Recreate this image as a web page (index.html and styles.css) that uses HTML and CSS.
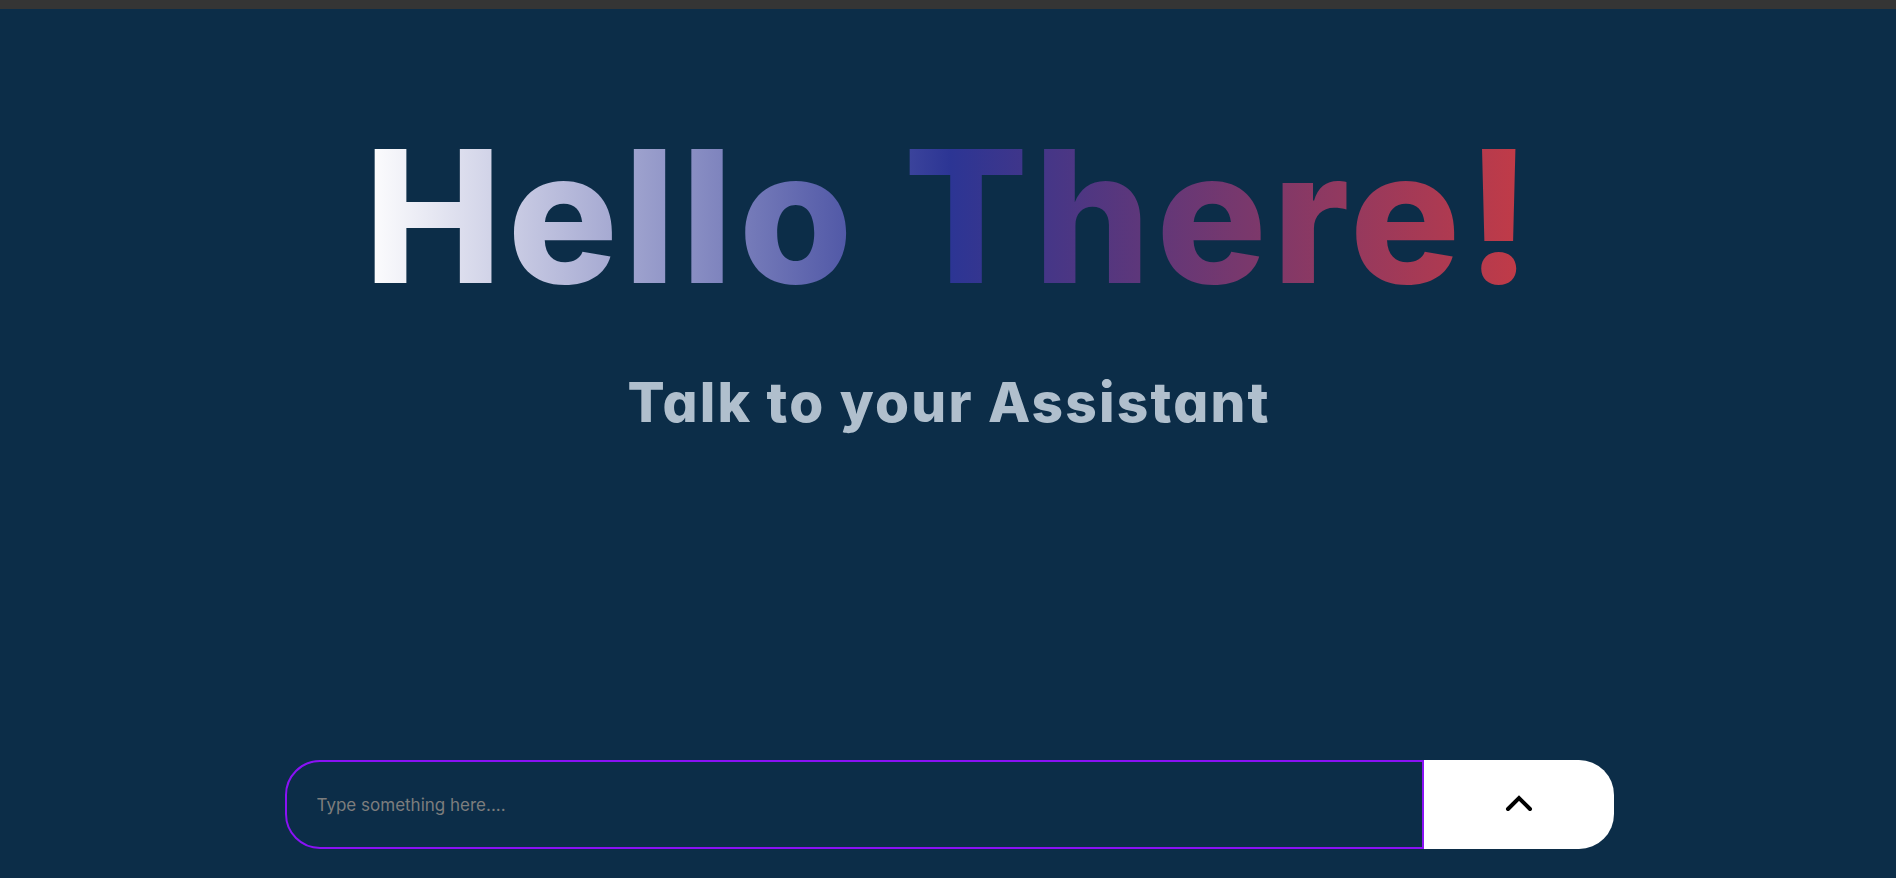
FILE: index.html
```html
<!DOCTYPE html>
<html lang="en">
<head>
<meta charset="utf-8">
<title>Assistant</title>
<link rel="stylesheet" href="styles.css">
</head>
<body>
<div class="topbar"></div>
<main class="page">
  <h1 class="hero"><span class="hero-text">Hello There!</span></h1>
  <h2 class="sub">Talk to your Assistant</h2>
  <form class="chat">
    <input class="chat-input" type="text" placeholder="Type something here....">
    <button class="chat-send" type="button" aria-label="Send">
      <svg width="28" height="18" viewBox="0 0 28 18"><polyline points="3,15 14,4 25,15" fill="none" stroke="#000" stroke-width="4" stroke-linecap="round" stroke-linejoin="miter"/></svg>
    </button>
  </form>
</main>
</body>
</html>
```
FILE: styles.css
```css
* { box-sizing: border-box; }
html, body { margin: 0; padding: 0; }
body {
  background: #0c2d48;
  font-family: Inter, "Liberation Sans", sans-serif;
  font-feature-settings: "cv11";
  height: 878px;
  overflow: hidden;
}
.topbar {
  height: 9px;
  background: #353535;
}
.page {
  display: flex;
  flex-direction: column;
  align-items: center;
}
.hero {
  margin: 115px 0 0;
  font-size: 184px;
  line-height: 1;
  font-weight: 800;
}
.hero-text {
  display: inline-block;
  letter-spacing: 5.5px;
  margin-right: -5.5px;
  background: linear-gradient(90deg, #ffffff 0%, #2c3594 50%, #c53b45 100%);
  -webkit-background-clip: text;
  background-clip: text;
  color: transparent;
}
.sub {
  margin: 67px -2.2px 0 0;
  font-size: 55px;
  line-height: 1;
  font-weight: 800;
  letter-spacing: 2.2px;
  white-space: nowrap;
  color: #b0bfcd;
}
.chat {
  margin: 330px 0 0 2px;
  width: 1329px;
  height: 89px;
  display: flex;
}
.chat-input {
  flex: 1;
  height: 100%;
  background: transparent;
  border: 2px solid #8a12f5;
  border-radius: 35px 0 0 35px;
  padding: 0 30px;
  font-family: Inter, "Liberation Sans", sans-serif;
  font-size: 17px;
  color: #ddd;
  outline: none;
}
.chat-input::placeholder { color: #7d7d7d; }
.chat-send {
  width: 190px;
  height: 100%;
  background: #fff;
  border: none;
  border-radius: 0 35px 35px 0;
  display: flex;
  align-items: center;
  justify-content: center;
  padding: 0 0 4px;
  cursor: pointer;
}
```
